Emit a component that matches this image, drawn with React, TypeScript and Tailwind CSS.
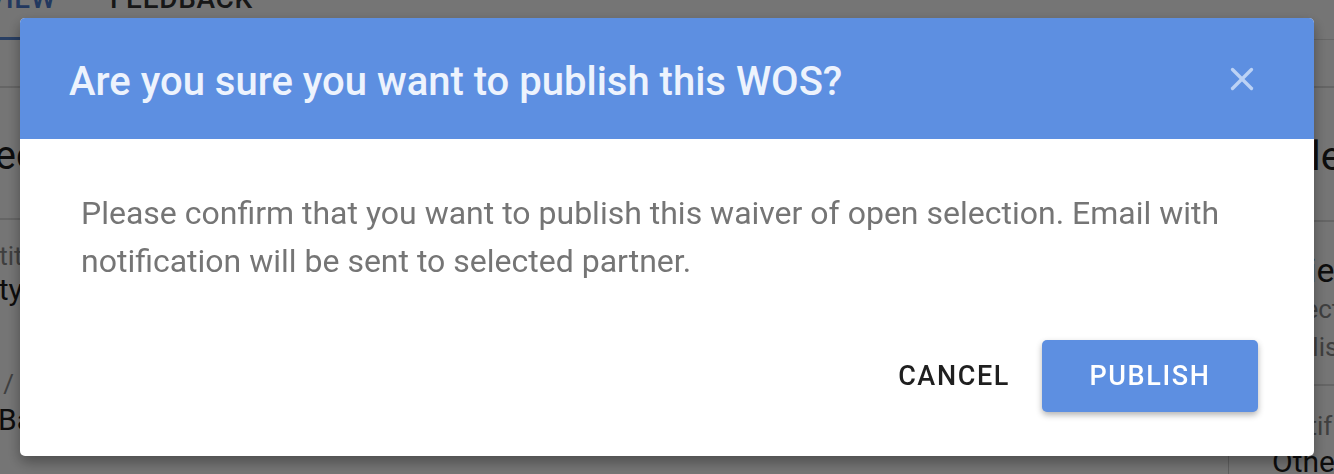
import { X } from "lucide-react";

const font = { fontFamily: "Roboto, 'Noto Sans', sans-serif" };

function BackgroundPage() {
  return (
    <div className="h-[474px] w-[1334px] overflow-hidden bg-white text-[#1d1d1d]">
      <div className="flex h-[40px] border-b border-[#e0e0e0]">
        <div className="-ml-[80px] flex h-[40px] w-[130px] items-start justify-center border-b-[3px] border-[#5a8ad8]">
          <span className="-mt-[22px] text-[28px] font-medium tracking-wide text-[#4a7bd0]">OVERVIEW</span>
        </div>
        <div className="ml-[60px] flex h-[40px] items-start">
          <span className="-mt-[22px] text-[28px] font-medium tracking-wide text-[#333]">FEEDBACK</span>
        </div>
      </div>
      <div className="h-[48px] border-b-2 border-[#dcdcdc]" />
      <div className="flex">
        <div className="w-[20px] overflow-hidden whitespace-nowrap bg-white">
          <div className="flex h-[132px] items-center border-b-2 border-[#dcdcdc] pt-[6px] text-[40px]">
            <span className="-ml-[60px]">Selected</span>
          </div>
          <div className="pt-[20px] text-[26px] leading-[32px] text-[#8a8a8a]">
            <span className="-ml-[30px] inline-block">Entitlement</span>
          </div>
          <div className="text-[30px] leading-[36px]">
            <span className="-ml-[52px] inline-block">Entity</span>
          </div>
          <div className="pt-[58px] text-[26px] leading-[36px] text-[#8a8a8a]">
            <span className="-ml-[14px] inline-block">/ /</span>
          </div>
          <div className="text-[30px] leading-[36px]">
            <span className="-ml-[2px] inline-block">Bank</span>
          </div>
        </div>
        <div className="ml-[1208px] flex-1 overflow-hidden whitespace-nowrap border-l border-[#d0d0d0] bg-white">
          <div className="flex h-[134px] items-center border-b-2 border-[#dcdcdc] pl-[37px] pt-[6px] text-[40px]">Selected</div>
          <div className="pl-[24px] pt-[28px] text-[34px] leading-[40px]">Review</div>
          <div className="pl-[40px] text-[26px] leading-[38px] text-[#8a8a8a]">Selected</div>
          <div className="pl-[38px] text-[26px] leading-[38px] text-[#8a8a8a]">Publish</div>
          <div className="mt-[18px] border-t-2 border-[#dcdcdc] pl-[46px] pt-[22px] text-[26px] leading-[36px] text-[#8a8a8a]">Notif</div>
          <div className="pl-[43px] text-[30px] leading-[36px]">Other</div>
        </div>
      </div>
    </div>
  );
}

export default function App() {
  return (
    <div className="relative h-[474px] w-[1334px] overflow-hidden" style={font}>
      <BackgroundPage />
      <div className="fixed inset-0 bg-black/[0.54] pl-[20px] pt-[18px]">
        <div className="h-[438px] w-[1294px] overflow-hidden rounded-[5px] bg-white shadow-[0_6px_14px_rgba(0,0,0,0.35)]">
          <div className="flex h-[121px] items-center justify-between bg-[#5d8fe1] pl-[49px] pr-[53px]">
            <h2 className="pt-[6px] text-[40px] font-medium leading-none text-[#edf3fd]">
              Are you sure you want to publish this WOS?
            </h2>
            <X size={38} strokeWidth={2.1} className="text-[#bcd2f5]" />
          </div>
          <div className="pl-[61px] pr-[50px] pt-[50px]">
            <p className="text-[32px] leading-[48px] text-[#757575]">
              Please confirm that you want to publish this waiver of open selection. Email with notification will be sent to selected partner.
            </p>
          </div>
          <div className="flex items-center justify-end gap-[32px] pr-[56px] pt-[55px]">
            <button type="button" className="text-[27px] font-medium tracking-[0.06em] text-[#1f1f1f]">
              CANCEL
            </button>
            <button
              type="button"
              className="h-[72px] w-[216px] rounded-[5px] bg-[#5d8fe1] text-[27px] font-medium tracking-[0.06em] text-white shadow-[0_3px_6px_rgba(0,0,0,0.3)]"
            >
              PUBLISH
            </button>
          </div>
        </div>
      </div>
    </div>
  );
}
